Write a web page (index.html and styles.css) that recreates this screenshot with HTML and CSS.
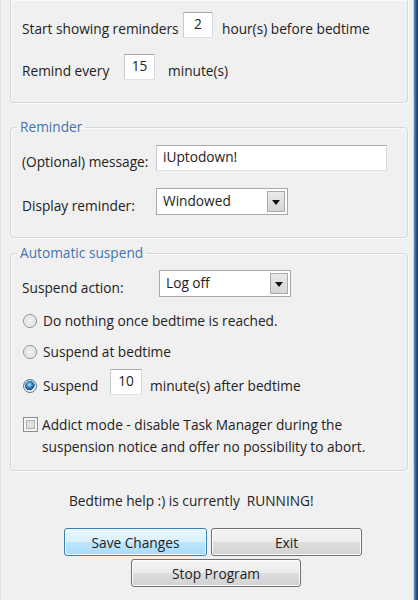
FILE: index.html
```html
<!DOCTYPE html>
<html lang="en">
<head>
<meta charset="utf-8">
<title>Bedtime help :)</title>
<link rel="stylesheet" href="styles.css">
</head>
<body>
<div class="window">
  <div class="edge-left"></div>
  <main class="content">
    <section class="group group-top">
      <div class="row">
        <span class="lbl w-start">Start showing reminders</span>
        <div class="textbox num w30">2</div>
        <span class="after m9">hour(s) before bedtime</span>
      </div>
      <div class="row mt16">
        <span class="lbl w-remind">Remind every</span>
        <div class="textbox num w31">15</div>
        <span class="after m13">minute(s)</span>
      </div>
    </section>

    <fieldset class="group group-reminder">
      <legend>Reminder</legend>
      <div class="row">
        <span class="lbl w-msg">(Optional) message:</span>
        <div class="textbox w-message">iUptodown!</div>
      </div>
      <div class="row row-select mt17">
        <span class="lbl w-msg">Display reminder:</span>
        <div class="combo w132">
          <span class="combo-text">Windowed</span>
          <span class="combo-btn"><span class="arrow"></span></span>
        </div>
      </div>
    </fieldset>

    <fieldset class="group group-suspend">
      <legend>Automatic suspend</legend>
      <div class="row row-select">
        <span class="lbl w-action">Suspend action:</span>
        <div class="combo w132">
          <span class="combo-text">Log off</span>
          <span class="combo-btn"><span class="arrow"></span></span>
        </div>
      </div>
      <div class="radio-row mt13">
        <span class="radio"></span>
        <span class="radio-text">Do nothing once bedtime is reached.</span>
      </div>
      <div class="radio-row mt9">
        <span class="radio"></span>
        <span class="radio-text">Suspend at bedtime</span>
      </div>
      <div class="radio-row radio-input mt6">
        <span class="radio checked"></span>
        <span class="radio-text w-suspend">Suspend</span>
        <div class="textbox num w32">10</div>
        <span class="after-r m8">minute(s) after bedtime</span>
      </div>
      <div class="check-row">
        <span class="checkbox"></span>
        <span class="check-text">Addict mode - disable Task Manager during the suspension notice and offer no possibility to abort.</span>
      </div>
    </fieldset>

    <div class="status">Bedtime help :) is currently&nbsp; RUNNING!</div>

    <div class="buttons">
      <button class="btn btn-default w-save">Save Changes</button>
      <button class="btn w-exit">Exit</button>
    </div>
    <div class="buttons buttons-2">
      <button class="btn w-stop">Stop Program</button>
    </div>
  </main>
  <div class="frame"></div>
</div>
</body>
</html>
```

FILE: styles.css
```css
html, body {
  margin: 0;
  padding: 0;
  height: 100%;
}

body {
  background: #f0f0f0;
  font-family: "Open Sans", "Noto Sans", sans-serif;
  font-size: 13.7px;
  color: #222;
  overflow: hidden;
}

.window {
  display: flex;
  height: 600px;
}

.edge-left {
  width: 2px;
  background: linear-gradient(to right, #d4d9de, #fbfbfb);
}

.content {
  flex: 1;
  padding: 0 5px 0 8px;
  min-width: 0;
}

.frame {
  width: 5px;
  background: linear-gradient(to right, #c9d6e3 0, #c9d6e3 1px, #5f8fc0 1px, #2f5f93 3px, #12305a 5px);
}

/* Group boxes */
.group {
  margin: 0;
  border: 1px solid #d3d8dc;
  border-radius: 4px;
  box-shadow: inset 1px 1px 0 #fafafa, 1px 1px 0 #fafafa;
  padding: 0 10px 0 11px;
  min-width: 0;
}

.group legend {
  color: #4373b0;
  font-size: 13.7px;
  line-height: 18px;
  padding: 0 3px;
  margin-left: -5px;
}

.group-top {
  border-top: none;
  border-radius: 0 0 4px 4px;
  padding-top: 12px;
  padding-bottom: 22px;
}

.group-reminder {
  margin-top: 15px;
  padding-top: 9px;
  padding-bottom: 22px;
}

.group-suspend {
  margin-top: 6px;
  padding-top: 8px;
  padding-bottom: 12px;
}

/* Rows */
.row {
  display: flex;
  align-items: center;
  height: 26px;
}

.row-select {
  height: 27px;
}

.mt16 { margin-top: 16px; }
.mt17 { margin-top: 17px; }
.mt13 { margin-top: 13px; }
.mt9 { margin-top: 9px; }
.mt6 { margin-top: 6px; }

.lbl,
.after {
  flex: none;
  white-space: nowrap;
  line-height: 18px;
  margin-top: 8px;
}

.w-start { width: 161px; }
.w-remind { width: 102px; }
.w-msg { width: 134px; }
.w-action { width: 137px; }

.after-r {
  white-space: nowrap;
  line-height: 18px;
  margin-top: 8px;
}

.m9 { margin-left: 9px; }
.m13 { margin-left: 13px; }
.m8 { margin-left: 8px; }

/* Text boxes */
.textbox {
  box-sizing: border-box;
  height: 26px;
  background: #fff;
  border: 1px solid #abadb3;
  border-color: #a4a8ae #d6dae0 #dfe3e8 #c8ccd2;
  line-height: 22px;
  padding: 0 6px;
  white-space: nowrap;
  flex: none;
}

.textbox.num {
  text-align: center;
  padding: 0;
}

.w30 { width: 30px; }
.w31 { width: 31px; }
.w32 { width: 32px; }
.w-message { width: 231px; }

/* Combo boxes */
.combo {
  box-sizing: border-box;
  height: 27px;
  display: flex;
  align-items: stretch;
  background: #fff;
  border: 1px solid #a8a8a8;
  flex: none;
}

.w132 { width: 132px; }

.combo-text {
  flex: 1;
  padding-left: 6px;
  line-height: 23px;
}

.combo-btn {
  box-sizing: border-box;
  width: 18px;
  margin: 2px;
  border: 1px solid #a9a9a9;
  background: linear-gradient(#e9e9e9, #d6d6d6);
  display: flex;
  align-items: center;
  justify-content: center;
}

.arrow {
  width: 0;
  height: 0;
  border-left: 4px solid transparent;
  border-right: 4px solid transparent;
  border-top: 5px solid #111;
  margin-top: 1px;
}

/* Radios */
.radio-row {
  display: flex;
  align-items: center;
  height: 22px;
}

.radio-row.radio-input {
  align-items: flex-start;
  height: 26px;
}

.radio-input .radio {
  margin-top: 10px;
}

.radio-input .radio-text {
  margin-top: 8px;
}

.radio {
  box-sizing: border-box;
  flex: none;
  width: 14px;
  height: 14px;
  margin-left: 1px;
  border-radius: 50%;
  border: 1px solid #8e8f8f;
  background: radial-gradient(circle at 50% 50%, #f4f4f4 0, #e2e2e2 55%, #c9c9c9 100%);
  box-shadow: inset 0 0 0 1px #f6f6f6;
}

.radio.checked {
  border-color: #5a7c9c;
  background:
    radial-gradient(circle at 45% 40%, #bfe4f8 0, #3a8ac0 28%, #1d4f7e 52%, transparent 56%),
    radial-gradient(circle at 50% 50%, #f0f0f0 0, #dcdcdc 70%, #c4c4c4 100%);
}

.radio-text {
  margin-left: 6px;
  line-height: 18px;
  white-space: nowrap;
}

.w-suspend {
  width: 67px;
  flex: none;
}

/* Checkbox */
.check-row {
  display: flex;
  align-items: flex-start;
  margin-top: 19px;
}

.checkbox {
  box-sizing: border-box;
  flex: none;
  width: 15px;
  height: 15px;
  margin-top: 3px;
  margin-left: 1px;
  border: 1px solid #8f8f8f;
  background: #f4f4f4;
  box-shadow: inset 0 0 0 2px #f4f4f4, inset 0 0 0 3px #b5b5b5, inset 0 0 0 6px #dedede;
}

.check-text {
  margin-left: 4px;
  line-height: 22px;
  width: 340px;
}

/* Status and buttons */
.status {
  margin-top: 21px;
  padding-left: 59px;
  line-height: 18px;
  white-space: nowrap;
}

.buttons {
  display: flex;
  gap: 4px;
  margin-top: 18px;
  padding-left: 54px;
}

.buttons-2 {
  margin-top: 3px;
  padding-left: 121px;
}

.btn {
  box-sizing: border-box;
  height: 28px;
  font-family: inherit;
  font-size: 13.7px;
  color: #222;
  border: 1px solid #707070;
  border-radius: 3px;
  background: linear-gradient(#f4f4f4 0%, #ececec 48%, #dddddd 52%, #d2d2d2 100%);
  box-shadow: inset 0 0 0 1px #fbfbfb;
  padding: 0;
}

.btn-default {
  border-color: #3c7fb1;
  background: linear-gradient(#eaf6fd 0%, #d9f0fc 48%, #bee6fd 52%, #a9dbf6 100%);
  box-shadow: inset 0 0 0 1px #f2fafe;
}

.w-save { width: 143px; }
.w-exit { width: 151px; }
.w-stop { width: 170px; }
```
